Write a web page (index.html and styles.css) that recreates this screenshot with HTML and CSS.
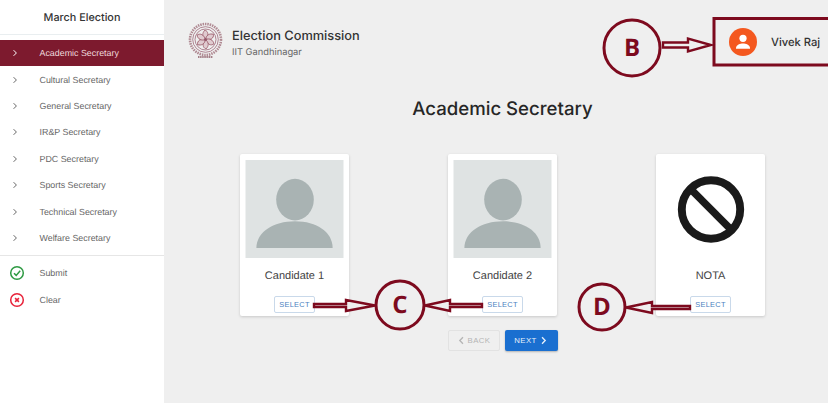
FILE: index.html
```html
<!DOCTYPE html>
<html lang="en">
<head>
<meta charset="utf-8">
<title>March Election</title>
<link rel="stylesheet" href="styles.css">
</head>
<body>
<div class="app">
  <aside class="sidebar">
    <div class="sidebar-title">March Election</div>
    <nav class="nav">
      <a class="nav-item active"><svg class="chev" viewBox="0 0 8 8"><path d="M2.6 1.2 5.4 4 2.6 6.8"/></svg><span>Academic Secretary</span></a>
      <a class="nav-item"><svg class="chev" viewBox="0 0 8 8"><path d="M2.6 1.2 5.4 4 2.6 6.8"/></svg><span>Cultural Secretary</span></a>
      <a class="nav-item"><svg class="chev" viewBox="0 0 8 8"><path d="M2.6 1.2 5.4 4 2.6 6.8"/></svg><span>General Secretary</span></a>
      <a class="nav-item"><svg class="chev" viewBox="0 0 8 8"><path d="M2.6 1.2 5.4 4 2.6 6.8"/></svg><span>IR&amp;P Secretary</span></a>
      <a class="nav-item"><svg class="chev" viewBox="0 0 8 8"><path d="M2.6 1.2 5.4 4 2.6 6.8"/></svg><span>PDC Secretary</span></a>
      <a class="nav-item"><svg class="chev" viewBox="0 0 8 8"><path d="M2.6 1.2 5.4 4 2.6 6.8"/></svg><span>Sports Secretary</span></a>
      <a class="nav-item"><svg class="chev" viewBox="0 0 8 8"><path d="M2.6 1.2 5.4 4 2.6 6.8"/></svg><span>Technical Secretary</span></a>
      <a class="nav-item"><svg class="chev" viewBox="0 0 8 8"><path d="M2.6 1.2 5.4 4 2.6 6.8"/></svg><span>Welfare Secretary</span></a>
    </nav>
    <div class="actions">
      <a class="nav-item"><svg class="act" viewBox="0 0 16 16"><circle cx="8" cy="8" r="6.3" class="ok"/><path d="M5 8.2 7.2 10.4 11.2 5.8" class="ok"/></svg><span>Submit</span></a>
      <a class="nav-item"><svg class="act" viewBox="0 0 16 16"><circle cx="8" cy="8" r="6.3" class="bad"/><path d="M6.1 6.1 9.9 9.9M9.9 6.1 6.1 9.9" class="bad"/></svg><span>Clear</span></a>
    </div>
  </aside>
  <main class="main">
    <header class="header">
      <div class="brand">
        <svg class="logo" viewBox="0 0 36 36">
          <circle cx="18.500" cy="17.500" r="15.500" class="l1"/>
          <circle cx="18.500" cy="17.500" r="12.800" class="l2"/>
          <circle cx="18.500" cy="17.500" r="10.500" class="l2"/>
          <g class="l3">
            <path d="M18.500 17.500C15 14.500 15 11 18 8c3.500 1.500 4 5.500.5 9.500z"/>
            <path d="M18.500 17.500C15 14.500 15 11 18 8c3.500 1.500 4 5.500.5 9.500z" transform="rotate(60 18.500 17.500)"/>
            <path d="M18.500 17.500C15 14.500 15 11 18 8c3.500 1.500 4 5.500.5 9.500z" transform="rotate(120 18.500 17.500)"/>
            <path d="M18.500 17.500C15 14.500 15 11 18 8c3.500 1.500 4 5.500.5 9.500z" transform="rotate(180 18.500 17.500)"/>
            <path d="M18.500 17.500C15 14.500 15 11 18 8c3.500 1.500 4 5.500.5 9.500z" transform="rotate(240 18.500 17.500)"/>
            <path d="M18.500 17.500C15 14.500 15 11 18 8c3.500 1.500 4 5.500.5 9.500z" transform="rotate(300 18.500 17.500)"/>
          </g>
          <circle cx="18.500" cy="17.500" r="1.500" class="l4"/>
          <path class="l5" d="M11 35h15"/>
        </svg>
        <div class="brand-text">
          <div class="brand-name">Election Commission</div>
          <div class="brand-sub">IIT Gandhinagar</div>
        </div>
      </div>
      <div class="user">
        <svg class="avatar" viewBox="0 0 28 28"><circle cx="14" cy="14" r="14" class="av-bg"/><circle cx="14" cy="10.300" r="3.600" class="av-fg"/><path class="av-fg" d="M7 20c0-3.400 4.400-4.600 7-4.600s7 1.200 7 4.600v.8H7z"/></svg>
        <span class="user-name">Vivek Raj</span>
      </div>
    </header>
    <h1 class="page-title">Academic Secretary</h1>
    <section class="cards">
      <article class="card">
        <svg class="photo" viewBox="0 0 99 99"><rect width="99" height="99" class="ph-bg"/><ellipse cx="50" cy="40" rx="19" ry="21" class="ph-fg"/><path class="ph-fg" d="M11 89c0-16 17-27 39-27s38 11 38 27z"/></svg>
        <div class="card-name">Candidate 1</div>
        <button class="select">SELECT</button>
      </article>
      <article class="card">
        <svg class="photo" viewBox="0 0 99 99"><rect width="99" height="99" class="ph-bg"/><ellipse cx="50" cy="40" rx="19" ry="21" class="ph-fg"/><path class="ph-fg" d="M11 89c0-16 17-27 39-27s38 11 38 27z"/></svg>
        <div class="card-name">Candidate 2</div>
        <button class="select">SELECT</button>
      </article>
      <article class="card">
        <svg class="photo" viewBox="0 0 99 99">
          <path d="M29 29 71 71" class="nota-bar"/><circle cx="50" cy="50" r="29.500" class="nota"/>
        </svg>
        <div class="card-name">NOTA</div>
        <button class="select">SELECT</button>
      </article>
    </section>
    <div class="pager">
      <button class="btn back"><svg class="btn-ic" viewBox="0 0 8 8"><path d="M5.300 1.200 2.500 4l2.800 2.800"/></svg>BACK</button>
      <button class="btn next">NEXT<svg class="btn-ic" viewBox="0 0 8 8"><path d="M2.700 1.200 5.500 4 2.700 6.800"/></svg></button>
    </div>
  </main>
  <svg class="overlay" viewBox="0 0 828 415">
    <rect x="714" y="18.500" width="120" height="46.500" class="mark"/>
    <circle cx="632" cy="48" r="28" class="mark"/>
    <path class="arrow" d="M663 42.500H688V38.500L711 45 688 51.500V47.500H663z"/>
    <circle cx="400" cy="305" r="24" class="mark"/>
    <path class="arrow" d="M314 304H346V300L375 305.500 346 311V307H314z"/>
    <path class="arrow" d="M482 304H450V300L425 305.500 450 311V307H482z"/>
    <circle cx="602" cy="307" r="23" class="mark"/>
    <path class="arrow" d="M690 306H652V302L626 307.500 652 313V309H690z"/>
    <text x="632" y="56" class="letter">B</text>
    <text x="400" y="313" class="letter">C</text>
    <text x="602" y="315" class="letter">D</text>
  </svg>
</div>
</body>
</html>
```
FILE: styles.css
```css
* { box-sizing: border-box; }
html, body { margin: 0; background: #fff; }
body { width: 828px; height: 415px; overflow: hidden; font-family: "Liberation Sans", Arial, sans-serif; text-rendering: geometricPrecision; }
.app { position: relative; display: flex; width: 828px; height: 403px; background: #efefef; }
.sidebar { width: 164px; flex: none; background: #fff; color: #555; }
.sidebar-title { height: 35px; padding-top: 10px; border-bottom: 1px solid #e9eef0; text-align: center; font-family: Inter, sans-serif; font-size: 10.8px; line-height: 15px; font-weight: 500; color: #333; }
.nav { padding-top: 5px; padding-bottom: 4px; border-bottom: 1px solid #e6e6e6; }
.nav-item { display: flex; align-items: center; height: 26.4px; font-size: 8.9px; color: #666; }
.chev { width: 8px; height: 8px; margin-left: 11px; flex: none; fill: none; stroke: #666; stroke-width: 1; }
.chev + span { margin-left: 20.500px; }
.active { background: #7d1a2e; color: #eed8dc; }
.active .chev { stroke: #fff; }
.actions { padding-top: 4px; }
.act { width: 16px; height: 16px; margin-left: 9px; flex: none; fill: none; }
.act + span { margin-left: 14.500px; }
.ok { stroke: #2e9a43; fill: none; stroke-width: 1.5; }
.bad { stroke: #e8233a; fill: none; stroke-width: 1.5; }
.main { flex: 1; min-width: 0; padding: 22px 10px 0 23px; display: flex; flex-direction: column; }
.header { display: flex; justify-content: space-between; height: 36px; }
.brand { display: flex; gap: 9px; }
.logo { width: 36px; height: 36px; fill: none; }
.l1 { stroke: #b08a93; stroke-width: 2.600; stroke-dasharray: 1.500 .9; fill: none; }
.l2 { stroke: #94586a; stroke-width: .7; fill: none; }
.l3 { stroke: #9a5a68; stroke-width: .8; fill: #e0cbd0; }
.l4 { fill: #94586a; }
.l5 { stroke: #8c5a66; stroke-width: 1.600; stroke-dasharray: 1.500 .6; }
.brand-text { padding-top: 7px; }
.brand-name { font-family: Inter, sans-serif; font-size: 12.800px; line-height: 16px; font-weight: 500; color: #333; }
.brand-sub { font-family: Inter, sans-serif; font-size: 9.300px; line-height: 13px; margin-top: 1px; color: #666; }
.user { display: flex; align-items: center; height: 40px; gap: 14px; margin-right: -2px; }
.avatar { width: 28px; height: 28px; }
.av-bg { fill: #f4581f; }
.av-fg { fill: #fff; }
.user-name { font-family: Inter, sans-serif; font-size: 11.200px; font-weight: 500; color: #333; width: 49px; white-space: nowrap; }
.page-title { margin: 39px 0 0; text-align: center; font-family: Inter, sans-serif; font-size: 18.600px; line-height: 24px; font-weight: 500; color: #262626; }
.cards { display: grid; grid-template-columns: repeat(3, 109px); gap: 99px; justify-content: center; margin-top: 33px; }
.card { height: 162px; padding-top: 6px; background: #fff; border-radius: 2px; box-shadow: 0 1px 3px rgba(0,0,0,.16); display: flex; flex-direction: column; align-items: center; }
.photo { width: 99px; height: 98px; flex: none; }
.ph-bg { fill: #dfe3e3; }
.ph-fg { fill: #a9b3b3; }
.nota { fill: none; stroke: #1a1a1a; stroke-width: 8; }
.nota-bar { fill: none; stroke: #1a1a1a; stroke-width: 7.500; }
.card-name { margin-top: 11px; font-size: 11px; line-height: 15px; color: #444; }
.select { margin-top: 12px; width: 41px; height: 17px; padding: 0; background: #fff; border: 1px solid #c9d9ea; border-radius: 2px; color: #4a7fc0; font-family: "Liberation Sans", Arial, sans-serif; font-size: 7.400px; letter-spacing: .3px; }
.pager { display: flex; justify-content: center; gap: 5px; margin-top: 14px; }
.btn { display: flex; align-items: center; justify-content: center; gap: 2px; height: 21px; padding: 0; border-radius: 2px; font-family: "Liberation Sans", Arial, sans-serif; font-size: 7.800px; letter-spacing: .4px; }
.btn-ic { width: 9px; height: 9px; fill: none; stroke: currentColor; stroke-width: 1.200; }
.back { width: 52px; background: #efefef; border: 1px solid #e2e2e2; color: #b5b5b5; }
.next { width: 53px; background: #1a6fd0; border: 0; color: #e8f1fb; box-shadow: 0 1px 2px rgba(0,0,0,.25); }
.overlay { position: absolute; left: 0; top: 0; width: 828px; height: 415px; pointer-events: none; }
.mark { fill: none; stroke: #7d0a1e; stroke-width: 3; }
.arrow { fill: #efefef; stroke: #7d0a1e; stroke-width: 2.400; }
.letter { font-family: "Open Sans", sans-serif; font-size: 24px; font-weight: 700; fill: #7d0a1e; text-anchor: middle; }
```
